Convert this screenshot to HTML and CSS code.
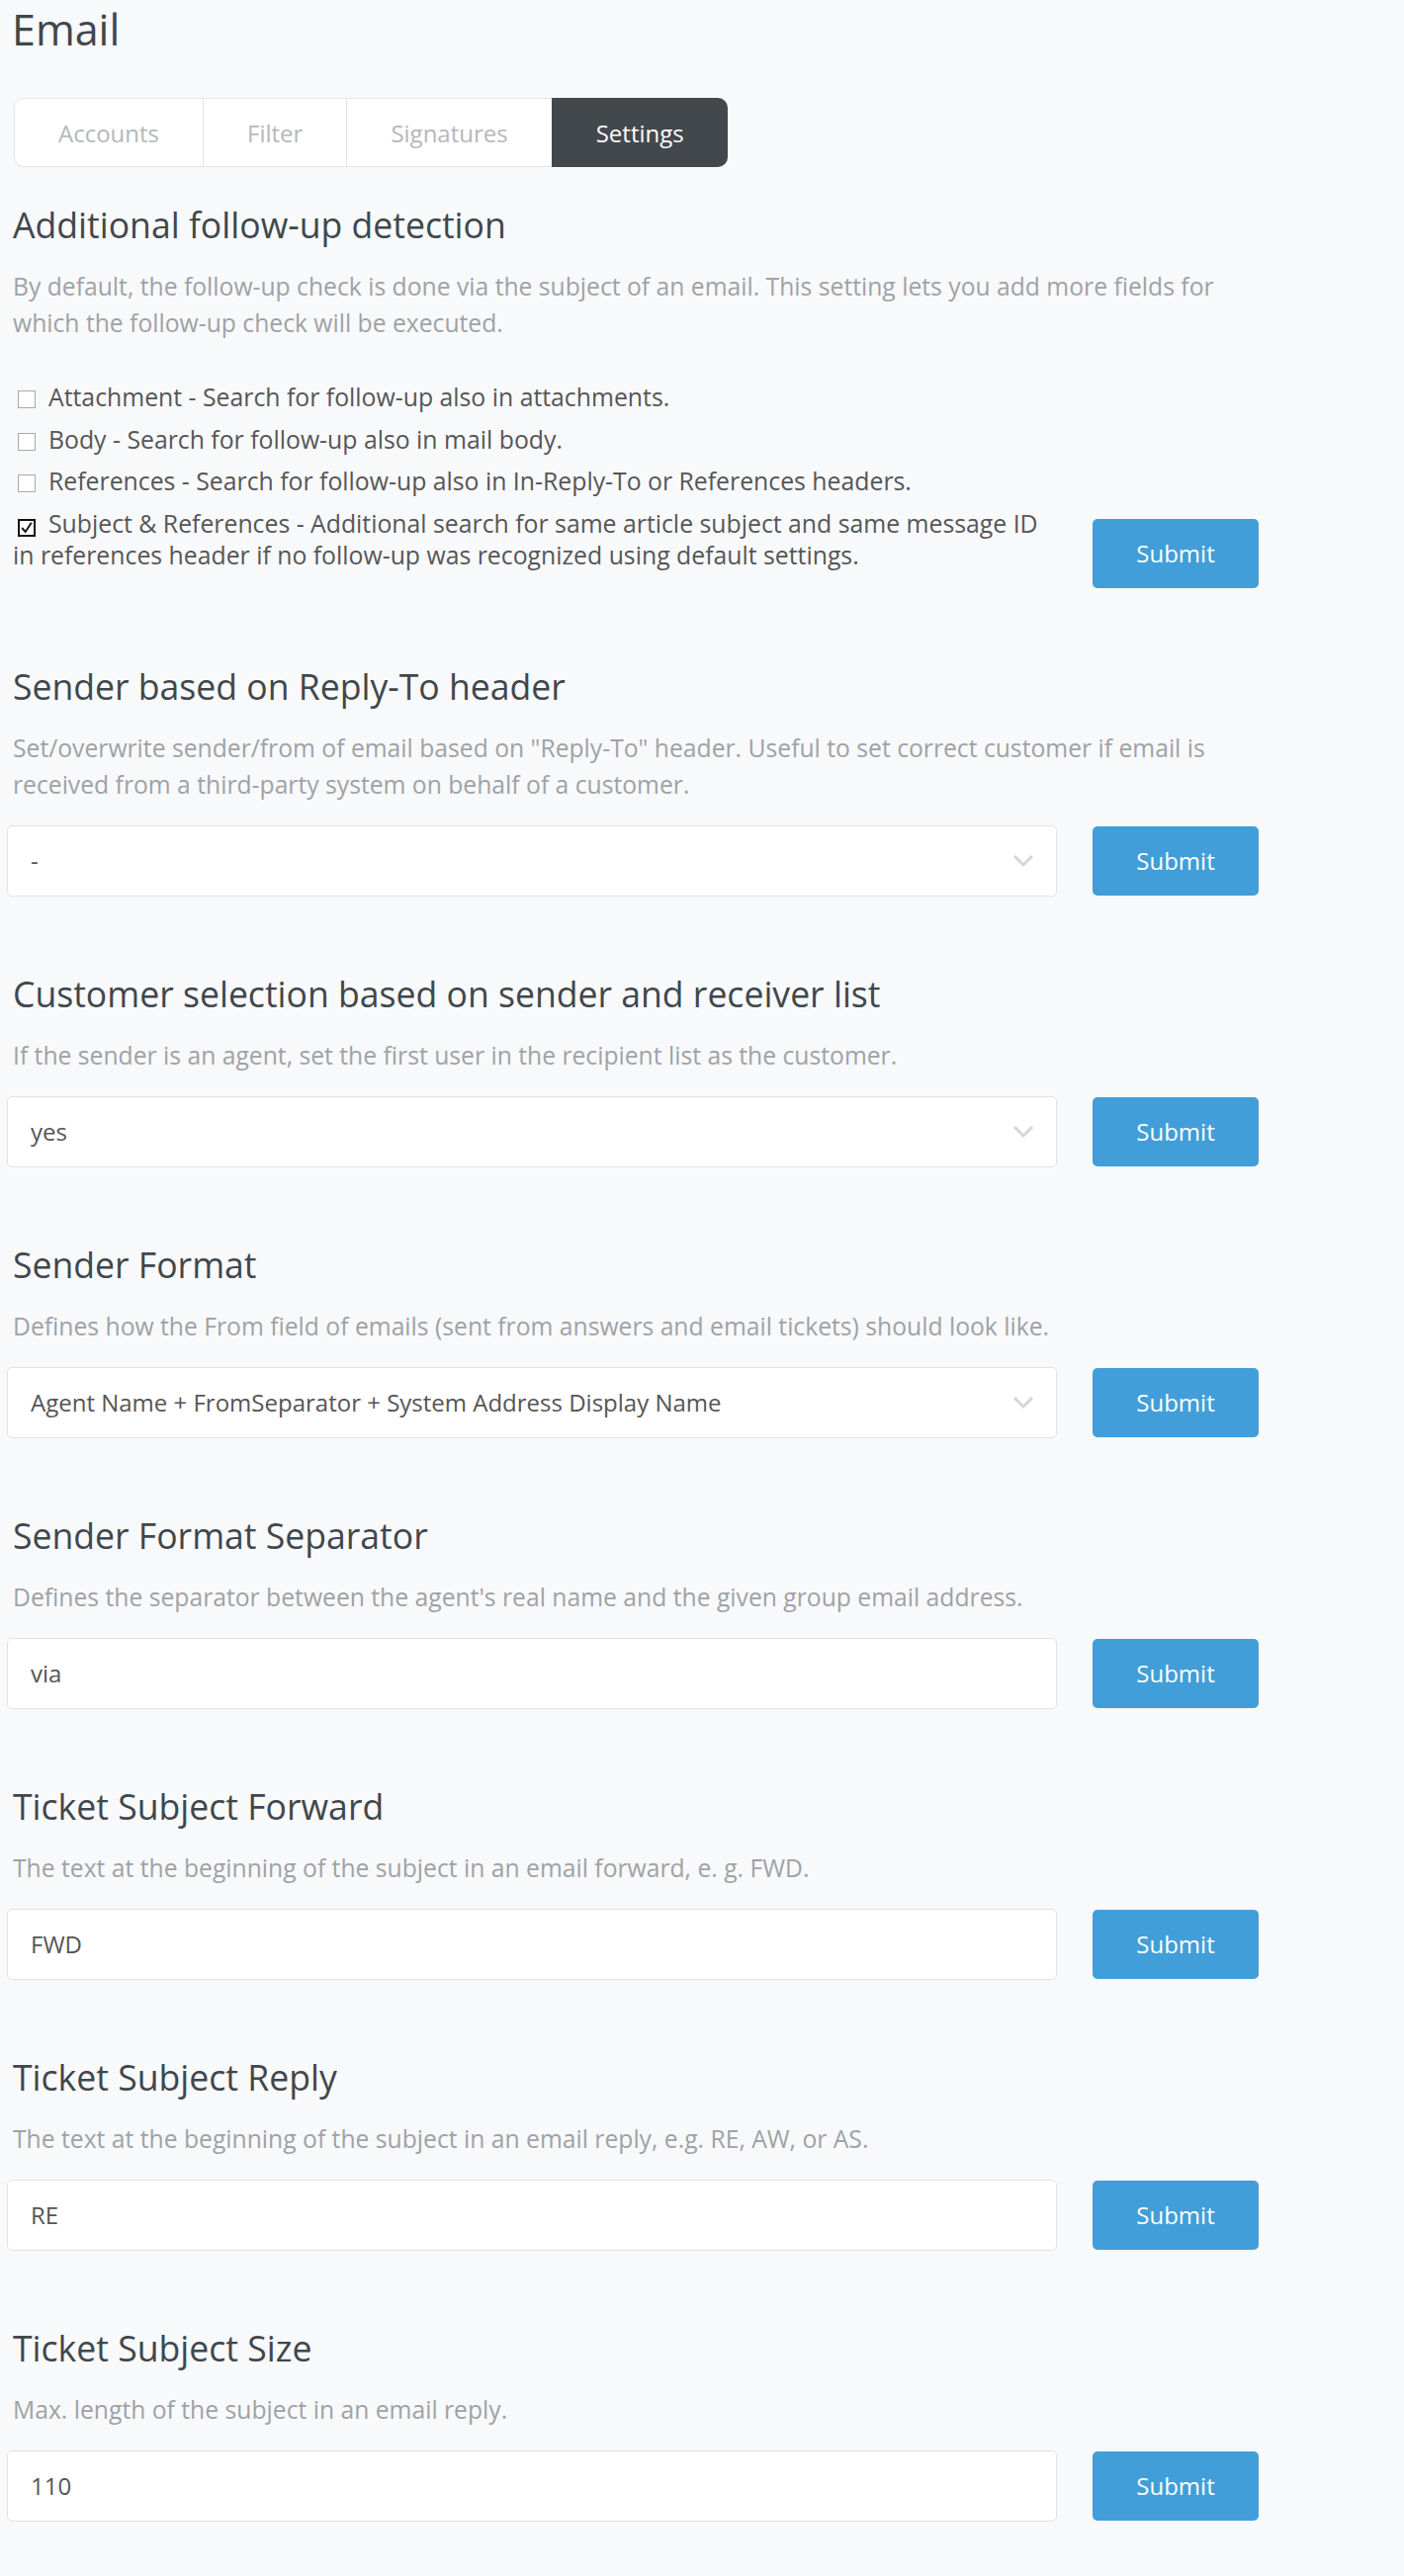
FILE: index.html
```html
<!DOCTYPE html>
<html lang="en">
<head>
<meta charset="utf-8">
<title>Email Settings</title>
<link rel="stylesheet" href="styles.css">
</head>
<body>
<main class="page">
  <h1 class="page-title">Email</h1>
  <nav class="tabs">
    <span class="tab">Accounts</span>
    <span class="tab">Filter</span>
    <span class="tab">Signatures</span>
    <span class="tab tab-active">Settings</span>
  </nav>

  <section class="setting">
    <h2 class="setting-title">Additional follow-up detection</h2>
    <p class="setting-desc">By default, the follow-up check is done via the subject of an email. This setting lets you add more fields for which the follow-up check will be executed.</p>
    <div class="setting-row">
      <div class="checks">
        <label class="check"><span class="box"></span>Attachment - Search for follow-up also in attachments.</label>
        <label class="check"><span class="box"></span>Body - Search for follow-up also in mail body.</label>
        <label class="check"><span class="box"></span>References - Search for follow-up also in In-Reply-To or References headers.</label>
        <label class="check"><span class="box box-checked"><svg viewBox="0 0 16 16" width="14" height="14"><path d="M2.5 8 L6.5 12.5 L13.5 2" fill="none" stroke="#111" stroke-width="2.2"/></svg></span>Subject &amp; References - Additional search for same article subject and same message ID in references header if no follow-up was recognized using default settings.</label>
      </div>
      <button class="btn">Submit</button>
    </div>
  </section>

  <section class="setting">
    <h2 class="setting-title">Sender based on Reply-To header</h2>
    <p class="setting-desc">Set/overwrite sender/from of email based on "Reply-To" header. Useful to set correct customer if email is received from a third-party system on behalf of a customer.</p>
    <div class="setting-row">
      <div class="field select"><span>-</span><svg class="chev" viewBox="0 0 22 14" width="22" height="14"><path d="M2 2 L11 11 L20 2" fill="none" stroke="#d6d6d6" stroke-width="3"/></svg></div>
      <button class="btn">Submit</button>
    </div>
  </section>

  <section class="setting">
    <h2 class="setting-title">Customer selection based on sender and receiver list</h2>
    <p class="setting-desc">If the sender is an agent, set the first user in the recipient list as the customer.</p>
    <div class="setting-row">
      <div class="field select"><span>yes</span><svg class="chev" viewBox="0 0 22 14" width="22" height="14"><path d="M2 2 L11 11 L20 2" fill="none" stroke="#d6d6d6" stroke-width="3"/></svg></div>
      <button class="btn">Submit</button>
    </div>
  </section>

  <section class="setting">
    <h2 class="setting-title">Sender Format</h2>
    <p class="setting-desc">Defines how the From field of emails (sent from answers and email tickets) should look like.</p>
    <div class="setting-row">
      <div class="field select"><span>Agent Name + FromSeparator + System Address Display Name</span><svg class="chev" viewBox="0 0 22 14" width="22" height="14"><path d="M2 2 L11 11 L20 2" fill="none" stroke="#d6d6d6" stroke-width="3"/></svg></div>
      <button class="btn">Submit</button>
    </div>
  </section>

  <section class="setting">
    <h2 class="setting-title">Sender Format Separator</h2>
    <p class="setting-desc">Defines the separator between the agent's real name and the given group email address.</p>
    <div class="setting-row">
      <div class="field"><span>via</span></div>
      <button class="btn">Submit</button>
    </div>
  </section>

  <section class="setting">
    <h2 class="setting-title">Ticket Subject Forward</h2>
    <p class="setting-desc">The text at the beginning of the subject in an email forward, e. g. FWD.</p>
    <div class="setting-row">
      <div class="field"><span>FWD</span></div>
      <button class="btn">Submit</button>
    </div>
  </section>

  <section class="setting">
    <h2 class="setting-title">Ticket Subject Reply</h2>
    <p class="setting-desc">The text at the beginning of the subject in an email reply, e.g. RE, AW, or AS.</p>
    <div class="setting-row">
      <div class="field"><span>RE</span></div>
      <button class="btn">Submit</button>
    </div>
  </section>

  <section class="setting setting-last">
    <h2 class="setting-title">Ticket Subject Size</h2>
    <p class="setting-desc">Max. length of the subject in an email reply.</p>
    <div class="setting-row">
      <div class="field"><span>110</span></div>
      <button class="btn">Submit</button>
    </div>
  </section>
</main>
</body>
</html>
```

FILE: styles.css
```css
html, body {
  margin: 0;
  padding: 0;
  background: #f8f9fb;
}

body {
  font-family: "Open Sans", "Noto Sans", sans-serif;
  color: #40474c;
}

.page {
  width: 1266px;
  padding: 5px 0 40px 7px;
}

.page-title {
  margin: 0 0 44px 5px;
  font-size: 43px;
  line-height: 50px;
  font-weight: 400;
  color: #40474c;
}

.tabs {
  display: inline-flex;
  margin-left: 7px;
  margin-bottom: 37px;
  background: #fff;
  border: 1px solid #e4e5e6;
  border-radius: 10px;
}

.tab {
  display: flex;
  align-items: center;
  height: 68px;
  padding: 0 44px;
  font-size: 24px;
  color: #b5b8ba;
  border-left: 1px solid #e4e5e6;
}

.tab:first-child {
  border-left: none;
}

.tab-active {
  background: #43484d;
  color: #fff;
  border-radius: 0 10px 10px 0;
  margin: -1px -1px -1px 0;
  height: 70px;
  border-left-color: #43484d;
}

.setting {
  padding-bottom: 77px;
}

.setting-last {
  padding-bottom: 40px;
}

.setting-title {
  margin: 0 0 23px 6px;
  font-size: 35.6px;
  line-height: 42px;
  font-weight: 400;
  color: #40474c;
}

.setting-desc {
  margin: 0 0 23px 6px;
  font-size: 24.7px;
  line-height: 37px;
  color: #9fa2a5;
  max-width: 1250px;
}

.setting-row {
  display: flex;
  align-items: flex-end;
  gap: 36px;
}

.checks {
  flex: 0 0 1056px;
  padding: 17px 0 19px 6px;
}

.check {
  display: block;
  font-size: 24.8px;
  line-height: 32px;
  color: #565656;
  margin-bottom: 10.5px;
}

.check:last-child {
  margin-bottom: 0;
}

.box {
  display: inline-flex;
  align-items: center;
  justify-content: center;
  box-sizing: border-box;
  width: 18px;
  height: 18px;
  margin: 0 13px 0 5px;
  border: 1.5px solid #a9a9a9;
  background: #fff;
  vertical-align: -2px;
}

.box-checked {
  border: 2px solid #111;
}

.field {
  flex: 0 0 1062px;
  box-sizing: border-box;
  height: 72px;
  display: flex;
  align-items: center;
  justify-content: space-between;
  padding: 0 22px 0 23px;
  background: #fff;
  border: 1px solid #e1e2e3;
  border-radius: 5px;
  font-size: 24px;
  color: #555;
}

.chev {
  flex: none;
}

.btn {
  flex: 0 0 168px;
  height: 70px;
  margin-bottom: 1px;
  border: none;
  border-radius: 5px;
  background: #429ed8;
  color: #fff;
  font-family: "Open Sans", "Noto Sans", sans-serif;
  font-size: 24px;
  font-weight: 500;
  padding: 0;
}
```
